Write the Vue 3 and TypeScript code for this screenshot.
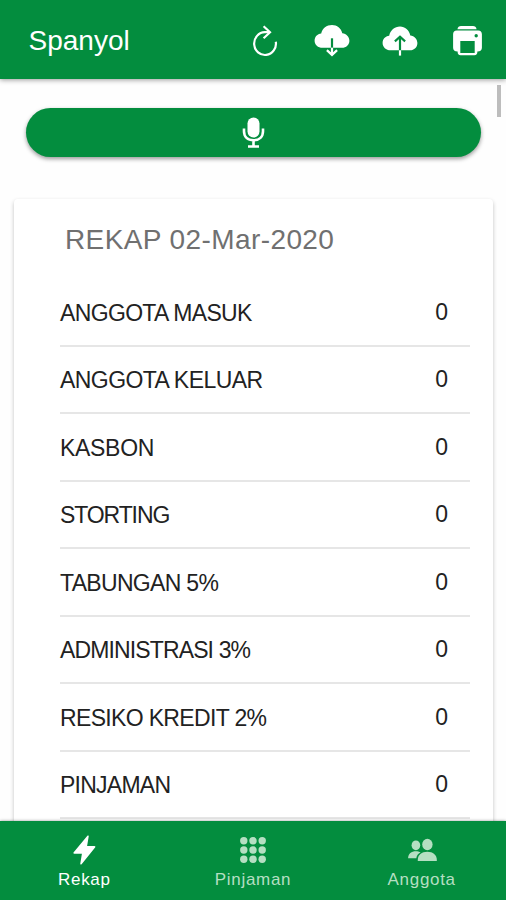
<script setup lang="ts">
interface Entry {
  label: string
  value: number
  tracking: number
}

const title = 'Spanyol'
const heading = 'REKAP 02-Mar-2020'

const entries: Entry[] = [
  { label: 'ANGGOTA MASUK', value: 0, tracking: -0.65 },
  { label: 'ANGGOTA KELUAR', value: 0, tracking: -0.57 },
  { label: 'KASBON', value: 0, tracking: -0.3 },
  { label: 'STORTING', value: 0, tracking: -1.1 },
  { label: 'TABUNGAN 5%', value: 0, tracking: -0.68 },
  { label: 'ADMINISTRASI 3%', value: 0, tracking: -0.87 },
  { label: 'RESIKO KREDIT 2%', value: 0, tracking: -0.66 },
  { label: 'PINJAMAN', value: 0, tracking: -0.75 },
]

const dots: number[] = [5.8, 15, 24.2]
</script>

<template>
  <div class="screen">
    <header class="toolbar">
      <h1 class="title">{{ title }}</h1>
      <div class="actions">
        <svg class="icon" viewBox="0 0 36 36" aria-hidden="true">
          <path class="line" d="M28.8 18.7A10.9 11.4 0 1 1 17.9 9.2H22.8" />
          <path class="line" d="M16.6 3.2L23 9.200L16.600 15.200" />
        </svg>
        <svg class="icon" viewBox="0 0 36 36" aria-hidden="true">
          <path class="solid" d="M8.6 24.8C3.900 24.800.600 21.700.600 17.700C.600 13.800 3.300 11 7.200 10.600C8.300 5.300 12.700 2 18 2C23 2 27.200 5.200 28.300 10.300C32.300 10.800 35.400 13.800 35.400 17.700C35.400 21.700 32.200 24.800 28 24.800Z" />
          <path class="cut" d="M18 15.300V24.800" />
          <path class="line" d="M18 24.800V32M12.900 27.100L18 31.900L23.100 27.100" />
        </svg>
        <svg class="icon" viewBox="0 0 36 36" aria-hidden="true">
          <path class="solid" d="M8.600 27.300C3.900 27.300.600 23.900.600 19.900C.600 16 3.300 13.100 7.200 12.700C8.300 7.200 12.700 3.400 18 3.400C23 3.400 27.200 6.900 28.300 12.400C32.300 12.900 35.400 16 35.400 20C35.400 24.200 32.200 27.300 28 27.300Z" />
          <path class="cut" d="M18 27.300V14M12.900 18.400L18 13.800L23.100 18.400" />
          <path class="line" d="M18 27.300V32.600" />
        </svg>
        <svg class="icon" viewBox="0 0 36 36" aria-hidden="true">
          <path class="solid" d="M8.400 6.300C8.800 4.300 10.100 3.100 12 3.100H24C25.900 3.100 27.200 4.300 27.600 6.300Z" />
          <path class="solid" fill-rule="evenodd" d="M7.800 7.500H29.200C31.600 7.500 32.900 9.100 32.900 11.300V24.700C32.900 27.100 31.600 28.500 28.400 28.500C28.400 31.200 27.500 32.200 25.400 32.200H11.600C9.500 32.200 8.600 31.200 8.600 28.500C5.400 28.500 4.100 27.100 4.100 24.700V11.300C4.100 9.100 5.400 7.500 7.800 7.500ZM11.300 18.100V30H25.700V18.100ZM27.200 11.100A1.700 1.700 0 1 0 27.200 14.500A1.700 1.700 0 1 0 27.200 11.100Z" />
        </svg>
      </div>
    </header>

    <main class="content">
      <button class="voice" type="button" aria-label="Mic">
        <svg class="mic" viewBox="0 0 24 34" aria-hidden="true">
          <rect class="solid" x="5.500" y="1.500" width="12" height="20" rx="6" />
          <path class="mic-line" d="M2 12.500V15.300C2 20.800 5.600 24.300 11.500 24.300C17.400 24.300 21 20.800 21 15.300V12.500M11.500 24.300V30.500M6 30.500H17" />
        </svg>
      </button>

      <section class="card">
        <h2 class="heading">{{ heading }}</h2>
        <ul class="list">
          <li v-for="entry in entries" :key="entry.label" class="row">
            <span :style="{ letterSpacing: entry.tracking + 'px' }">{{ entry.label }}</span>
            <span class="value">{{ entry.value }}</span>
          </li>
        </ul>
      </section>
      <span class="thumb"></span>
    </main>

    <nav class="tabs">
      <a class="tab active">
        <svg class="tab-icon" viewBox="0 0 30 30" aria-hidden="true">
          <path fill="currentColor" d="M18.400.800C19.100.200 19.900.500 19.700 1.500L18.100 11H25.400C26.400 11 26.700 11.800 26.100 12.600L12.600 29.200C11.900 29.900 11.100 29.500 11.300 28.500L12.900 18.700H5.300C4.300 18.700 4.100 17.900 4.700 17.200Z" />
        </svg>
        <span class="tab-label">Rekap</span>
      </a>
      <a class="tab">
        <svg class="tab-icon" viewBox="0 0 30 30" aria-hidden="true">
          <template v-for="y in dots" :key="y">
            <circle v-for="x in dots" :key="x" :cx="x" :cy="y" r="3.700" fill="currentColor" />
          </template>
        </svg>
        <span class="tab-label">Pinjaman</span>
      </a>
      <a class="tab">
        <svg class="tab-icon" viewBox="0 0 30 30" aria-hidden="true">
          <g fill="currentColor">
            <ellipse cx="8.900" cy="10.300" rx="4.300" ry="4.900" />
            <ellipse cx="20.400" cy="9.500" rx="5.200" ry="5.700" />
            <path d="M1.100 23.300C1.100 18.700 4.500 16.300 8.800 16.300C10.500 16.300 12.200 16.700 13.600 17.600C11.100 18.900 9.600 20.700 9.300 23.300Z" />
            <path d="M10.800 26C10.300 20.200 14.300 16.700 20.300 16.700C26.300 16.700 30.300 20.200 29.800 26Z" />
          </g>
        </svg>
        <span class="tab-label">Anggota</span>
      </a>
    </nav>
  </div>
</template>

<style>
body {
  margin: 0;
  overflow: hidden;
}
</style>

<style scoped>
.screen {
  display: flex;
  flex-direction: column;
  width: 100%;
  height: 900px;
  overflow: hidden;
  background: #fefefe;
  color: #222;
  font-family: "Liberation Sans", Arial, sans-serif;
}

.toolbar {
  position: relative;
  z-index: 1;
  flex: none;
  display: flex;
  align-items: center;
  justify-content: space-between;
  box-sizing: border-box;
  height: 79px;
  padding: 3px 21px 0 28.500px;
  background: #038d3e;
  color: #fff;
  box-shadow: 0 1px 5px rgba(0, 0, 0, 0.4);
}

.title {
  margin: 0;
  font-size: 28px;
  font-weight: 400;
  line-height: 32px;
}

.actions {
  display: flex;
  gap: 31.500px;
}

.icon {
  display: block;
  width: 36px;
  height: 36px;
}

.solid {
  fill: #fff;
}

.line,
.cut,
.mic-line {
  fill: none;
  stroke: #fff;
  stroke-width: 2.200;
}

.cut {
  stroke: #038d3e;
}

.mic-line {
  stroke-width: 2.600;
}

.content {
  position: relative;
  flex: 1;
  min-height: 0;
  overflow: hidden;
  padding: 29px 13px 0 14px;
}

.voice {
  display: flex;
  align-items: center;
  justify-content: center;
  width: 455px;
  height: 49px;
  margin: 0 0 42px 12px;
  padding: 0;
  border: 0;
  border-radius: 25px;
  background: #038d3e;
  box-shadow: 0 2px 4px rgba(0, 0, 0, 0.4);
}

.mic {
  width: 24px;
  height: 34px;
}

.card {
  height: 700px;
  box-sizing: border-box;
  padding: 25px 23px 0 46px;
  border-radius: 4px;
  background: #fff;
  box-shadow: 0 2px 4px rgba(0, 0, 0, 0.24);
}

.heading {
  margin: 0 0 23px 5px;
  color: #707070;
  font-size: 28px;
  font-weight: 400;
  line-height: 32px;
  letter-spacing: 0.400px;
}

.list {
  margin: 0;
  padding: 0;
  list-style: none;
}

.row {
  display: flex;
  align-items: center;
  justify-content: space-between;
  box-sizing: border-box;
  height: 67.500px;
  padding: 2px 22px 0 0;
  border-bottom: 2px solid #e6e6e6;
  font-size: 23px;
  line-height: 28px;
}

.value {
  padding-bottom: 2px;
}

.thumb {
  position: absolute;
  top: 6px;
  right: 5px;
  width: 4px;
  height: 32px;
  background: #bdbdbd;
}

.tabs {
  position: relative;
  flex: none;
  display: grid;
  grid-template-columns: repeat(3, 1fr);
  height: 79px;
  background: #038d3e;
  box-shadow: 0 0 3px rgba(0, 0, 0, 0.400);
}

.tab {
  display: flex;
  flex-direction: column;
  align-items: center;
  padding-top: 14px;
  color: #b5dfc2;
}

.tab.active {
  color: #fff;
}

.tab-icon {
  width: 30px;
  height: 30px;
}

.tab-label {
  margin-top: 5px;
  font-size: 17px;
  line-height: 20px;
  letter-spacing: 0.700px;
}
</style>
